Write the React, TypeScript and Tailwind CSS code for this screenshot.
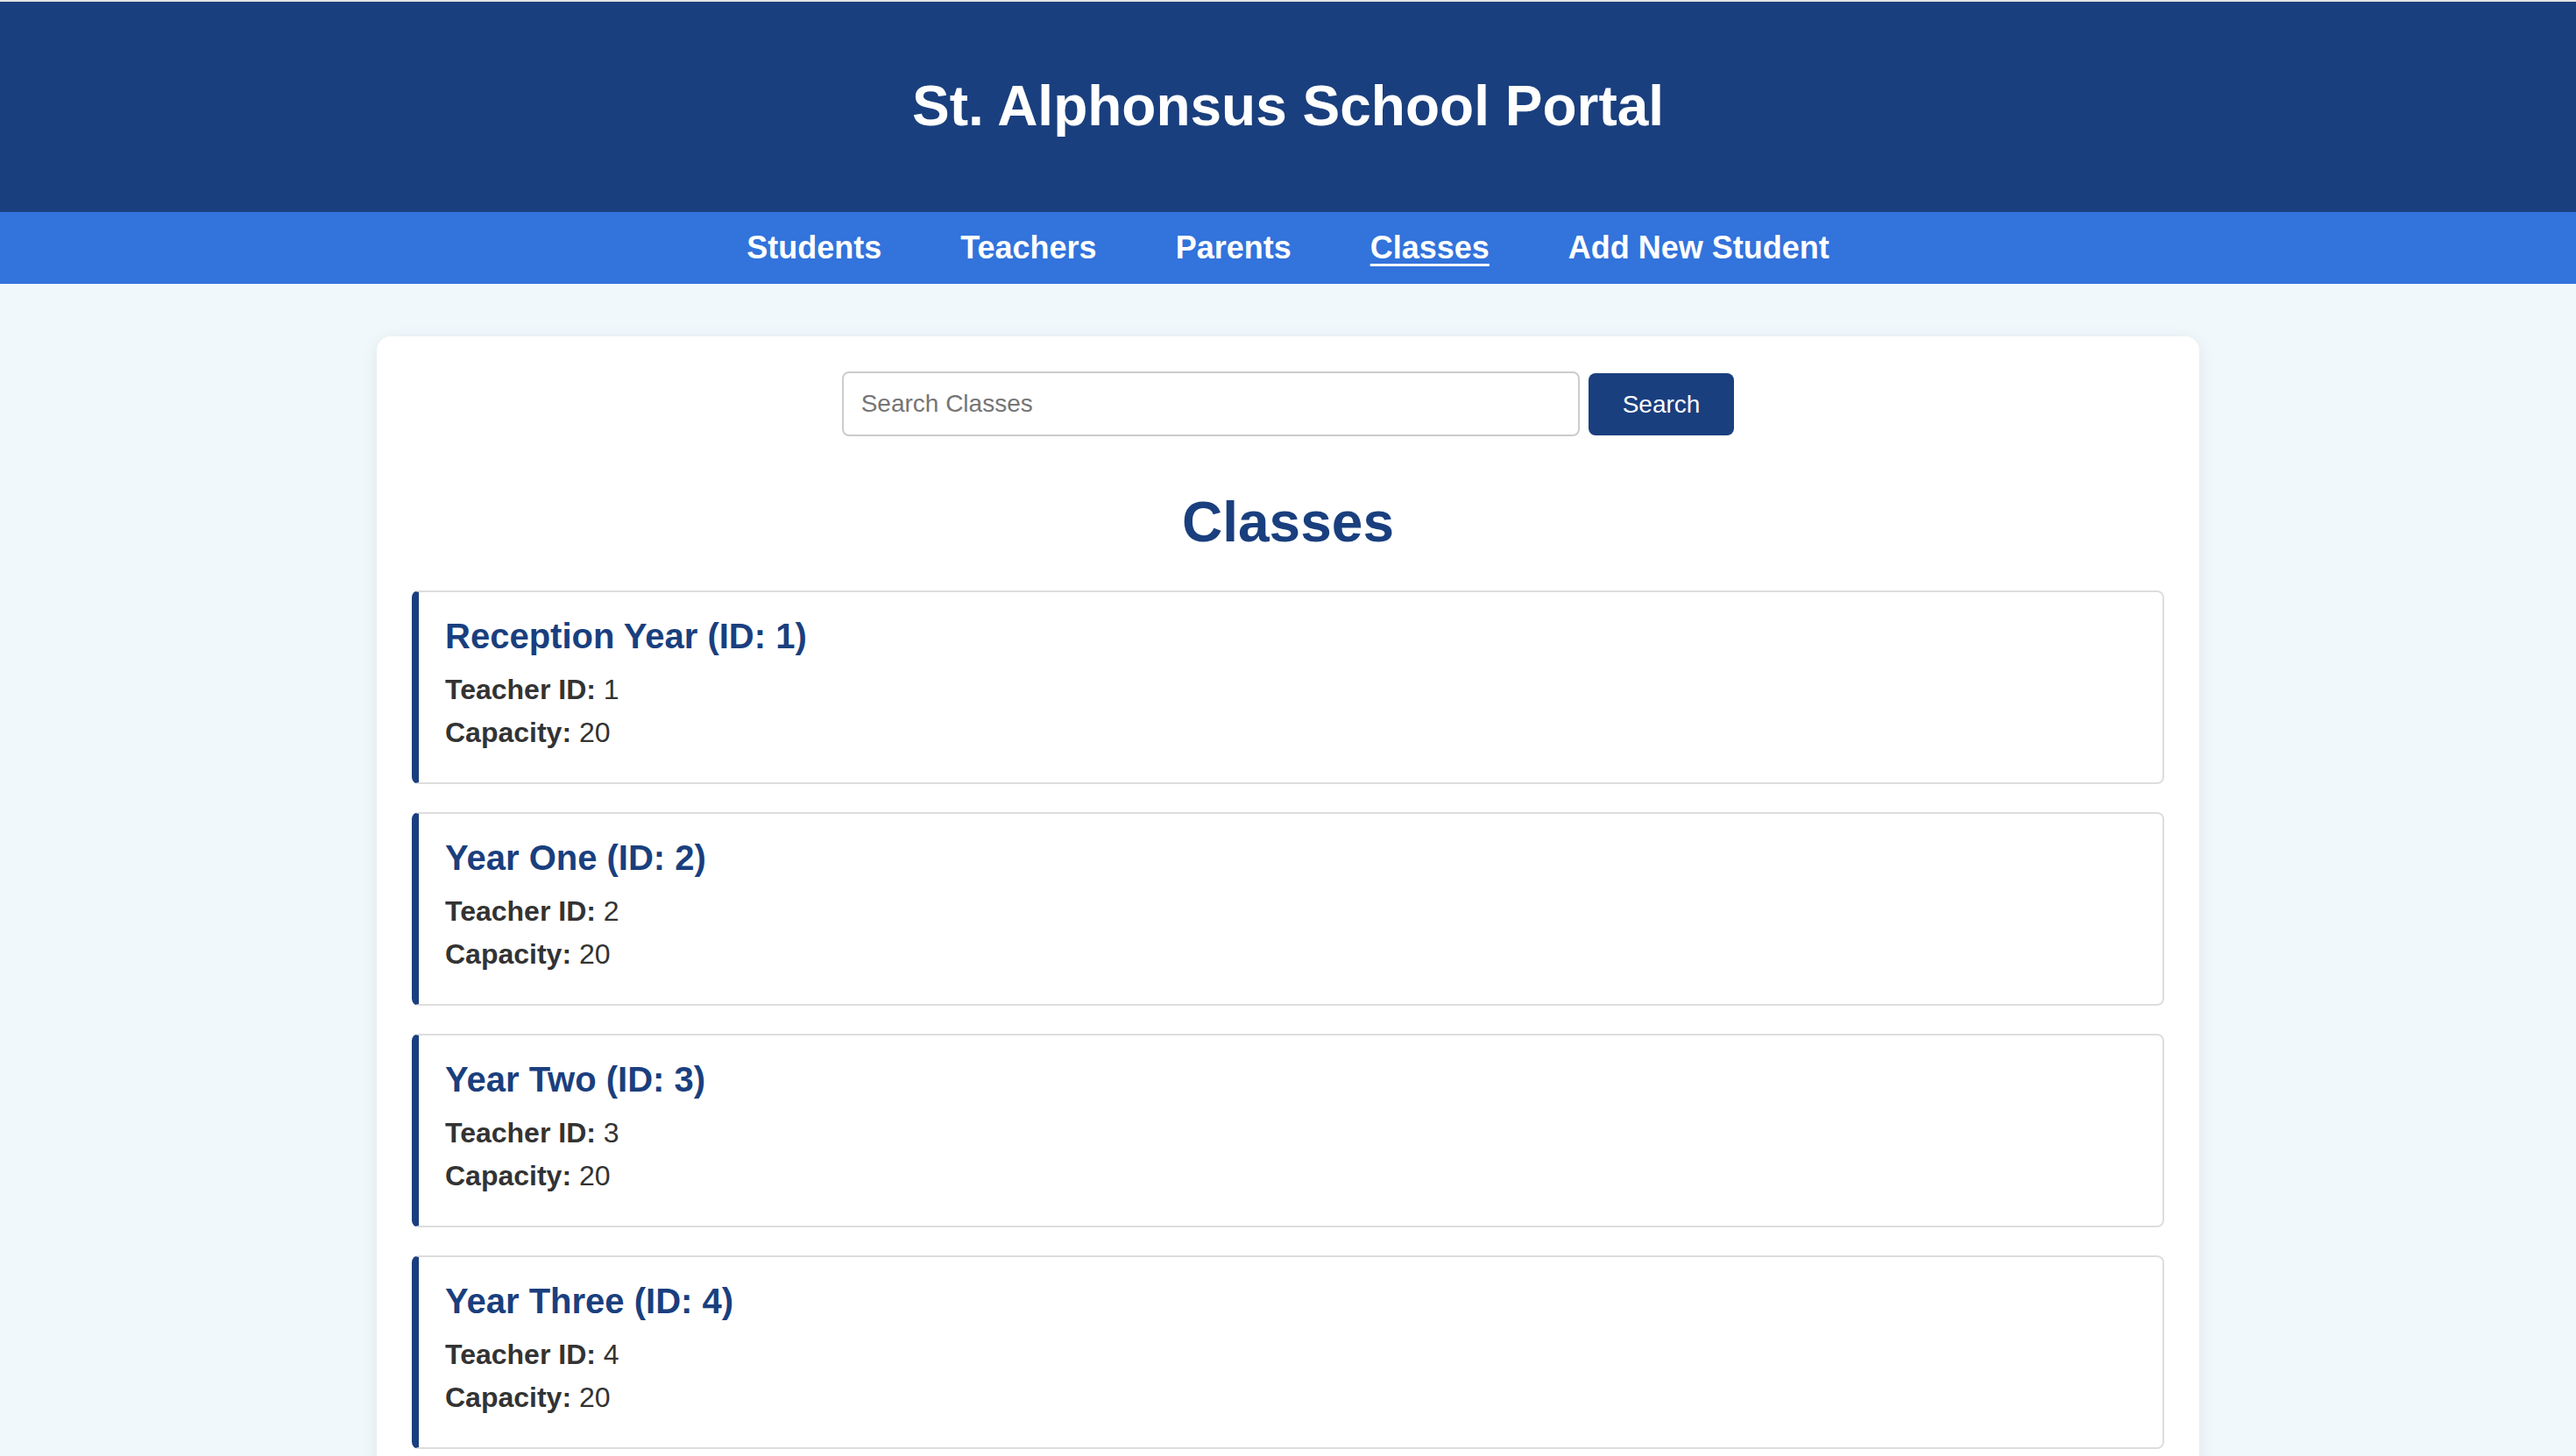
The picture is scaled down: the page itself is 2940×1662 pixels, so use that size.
import React from "react";

const classes = [
  { id: 1, name: "Reception Year", teacherId: 1, capacity: 20 },
  { id: 2, name: "Year One", teacherId: 2, capacity: 20 },
  { id: 3, name: "Year Two", teacherId: 3, capacity: 20 },
  { id: 4, name: "Year Three", teacherId: 4, capacity: 20 },
];

const navLinks = [
  { label: "Students", active: false },
  { label: "Teachers", active: false },
  { label: "Parents", active: false },
  { label: "Classes", active: true },
  { label: "Add New Student", active: false },
];

const ClassCard = ({ name, id, teacherId, capacity }: {
  name: string,
  id: number,
  teacherId: number,
  capacity: number
}) => {
  return (
    <div className="bg-white border-2 border-[#dddddd] border-l-8 border-l-[#1a3f7e] rounded-[8px] pl-[30px] pr-[30px] pt-[27px] pb-[32px]">
      <h3 className="text-[40px] leading-[46px] font-bold text-[#1a3f7e] mb-[14px]">
        {name} (ID: {id})
      </h3>
      <p className="text-[32px] leading-[49px] text-[#333333]">
        <span className="font-bold">Teacher ID:</span> {teacherId}
      </p>
      <p className="text-[32px] leading-[49px] text-[#333333]">
        <span className="font-bold">Capacity:</span> {capacity}
      </p>
    </div>
  );
};

export default function App() {
  return (
    <div className="min-h-screen bg-[#f0f8fb] font-['Liberation_Sans',Arial,sans-serif] border-t-2 border-[#e4e4e4]">
      <header className="bg-[#1a3f7e] h-[240px] flex items-center justify-center">
        <h1 className="text-white text-[64px] font-bold leading-[1.15]">St. Alphonsus School Portal</h1>
      </header>

      <nav className="bg-[#3273dc] h-[82px] flex items-center justify-center gap-[90px]">
        {navLinks.map((link) => (
          <a
            key={link.label}
            href="#"
            className={
              link.active
                ? "text-white text-[36px] font-bold underline underline-offset-[6px] decoration-[3px]"
                : "text-white text-[36px] font-bold no-underline"
            }
          >
            {link.label}
          </a>
        ))}
      </nav>

      <main className="pt-[60px] px-[430px]">
        <div className="bg-white rounded-[16px] shadow-[0_4px_20px_rgba(0,0,0,0.08)] p-[40px]">
          <form className="flex justify-center gap-[10px]" onSubmit={(e) => e.preventDefault()}>
            <input
              type="text"
              placeholder="Search Classes"
              className="w-[842px] h-[74px] border-2 border-[#cccccc] rounded-[8px] px-[20px] text-[28px] text-[#333333] placeholder:text-[#757575] bg-white outline-none"
            />
            <button
              type="submit"
              className="mt-[2px] h-[71px] px-[39px] bg-[#1a3f7e] text-white text-[28px] rounded-[8px]"
            >
              Search
            </button>
          </form>

          <h2 className="text-center text-[64px] leading-[1.15] font-bold text-[#1a3f7e] mt-[62px] mb-[40px]">
            Classes
          </h2>

          <div className="flex flex-col gap-[32px]">
            {classes.map((c) => (
              <ClassCard key={c.id} name={c.name} id={c.id} teacherId={c.teacherId} capacity={c.capacity} />
            ))}
          </div>
        </div>
      </main>
    </div>
  );
}
